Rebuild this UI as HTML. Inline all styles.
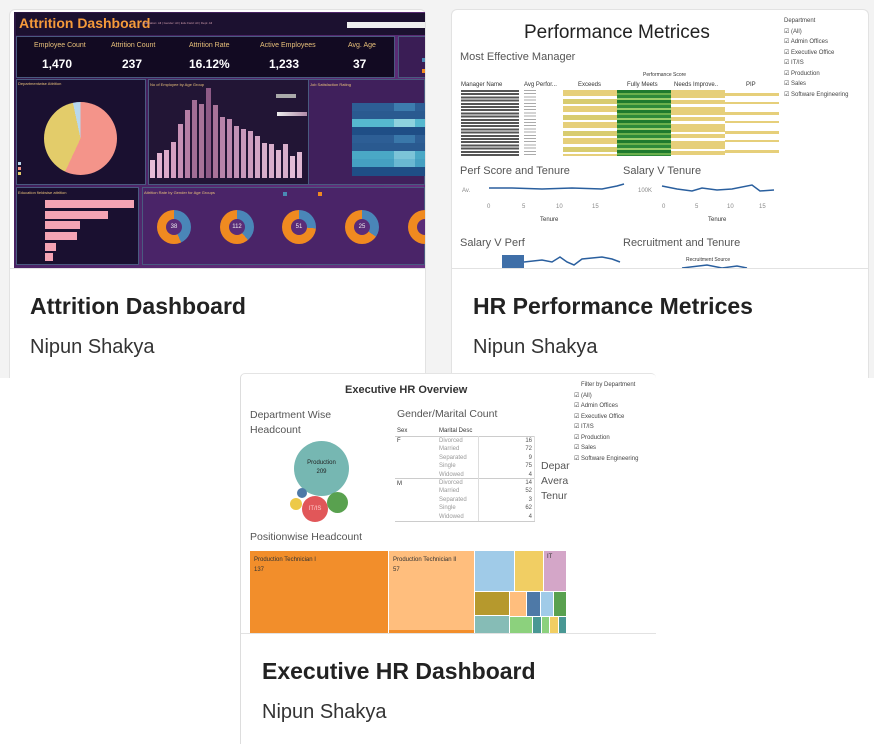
<!DOCTYPE html>
<html><head><meta charset="utf-8">
<style>
*{margin:0;padding:0;box-sizing:border-box}
body{width:874px;height:744px;overflow:hidden;background:#fff;font-family:"Liberation Sans",sans-serif;position:relative}
.a{position:absolute}
.t{font-family:"Liberation Sans",sans-serif}
</style></head><body>
<div class="a" style="left:0;top:0;width:874px;height:378px;background:#f3f3f3"></div>

<div class="a" style="left:9px;top:9px;width:417px;height:369px;background:#fff;border:1px solid #e2e2e2;border-bottom:none;border-radius:6px 6px 0 0"></div>
<div class="a" style="left:451px;top:9px;width:418px;height:369px;background:#fff;border:1px solid #e2e2e2;border-bottom:none;border-radius:6px 6px 0 0"></div>

<!-- Attrition thumbnail -->
<div class="a" style="left:14px;top:12px;width:411px;height:256px;background:linear-gradient(135deg,#2a1640 0%,#4b2366 40%,#5e2d78 70%,#6a3384 100%);overflow:hidden">
  <div class="a" style="left:2px;top:1px;width:409px;height:22px;background:#1c1130"></div>
  <div class="a t" style="left:5px;top:3px;color:#f59a3a;font-size:14px;font-weight:bold">Attrition Dashboard</div>
  <div class="a t" style="left:129px;top:9px;color:#c9a;font-size:3px">Education: All | Gender: All | Edu Field: All | Dept: All</div>
  <div class="a" style="left:333px;top:10px;width:80px;height:6px;background:#eee"></div>
  <div class="a" style="left:2px;top:24px;width:379px;height:42px;background:#120a22;border:1px solid #4a5a80"></div>
  <div class="a t" style="left:20px;top:30px;color:#e8c07a;font-size:7px">Employee Count</div>
  <div class="a t" style="left:28px;top:45px;color:#fff;font-size:12px;font-weight:bold">1,470</div>
  <div class="a t" style="left:97px;top:30px;color:#e8c07a;font-size:7px">Attrition Count</div>
  <div class="a t" style="left:108px;top:45px;color:#fff;font-size:12px;font-weight:bold">237</div>
  <div class="a t" style="left:175px;top:30px;color:#e8c07a;font-size:7px">Attrition Rate</div>
  <div class="a t" style="left:175px;top:45px;color:#fff;font-size:12px;font-weight:bold">16.12%</div>
  <div class="a t" style="left:246px;top:30px;color:#e8c07a;font-size:7px">Active Employees</div>
  <div class="a t" style="left:255px;top:45px;color:#fff;font-size:12px;font-weight:bold">1,233</div>
  <div class="a t" style="left:334px;top:30px;color:#e8c07a;font-size:7px">Avg. Age</div>
  <div class="a t" style="left:339px;top:45px;color:#fff;font-size:12px;font-weight:bold">37</div>
  <div class="a" style="left:384px;top:24px;width:30px;height:42px;background:#3a1d55;border:1px solid #4a5a80"></div>
  <div class="a" style="left:408px;top:46px;width:4px;height:4px;background:#4a8ab5"></div>
  <div class="a" style="left:408px;top:57px;width:4px;height:4px;background:#f08a20"></div>
  <div class="a" style="left:2px;top:67px;width:130px;height:106px;background:#1a1030;border:1px solid #4a5a80"></div>
  <div class="a t" style="left:4px;top:69px;color:#e8c07a;font-size:4px">Departmentwise Attrition</div>
  <div class="a" style="left:30px;top:90px;width:73px;height:73px;border-radius:50%;background:conic-gradient(#f4948a 0deg 205deg,#e3cc6a 205deg 348deg,#b8d8ee 348deg 360deg)"></div>
  <div class="a" style="left:4px;top:150px;width:3px;height:3px;background:#b8d8ee"></div>
  <div class="a" style="left:4px;top:155px;width:3px;height:3px;background:#f4948a"></div>
  <div class="a" style="left:4px;top:160px;width:3px;height:3px;background:#e3cc6a"></div>
  <div class="a" style="left:134px;top:67px;width:172px;height:106px;background:#221535;border:1px solid #4a5a80"></div>
  <div class="a t" style="left:136px;top:70px;color:#e8c07a;font-size:4px">No of Employee by Age Group</div>
  <div class="a" style="left:262px;top:82px;width:20px;height:4px;background:#aaa"></div>
  <div class="a" style="left:263px;top:100px;width:30px;height:4px;background:linear-gradient(90deg,#eee,#b08aa8)"></div>
  <div class="a" style="left:-14px;top:-12px;width:425px;height:268px">
  <div class="a" style="left:150px;top:160px;width:5px;height:18px;background:#e7bcd7"></div>
  <div class="a" style="left:157px;top:153px;width:5px;height:25px;background:#e2b2d0"></div>
  <div class="a" style="left:164px;top:150px;width:5px;height:28px;background:#dcaaca"></div>
  <div class="a" style="left:171px;top:142px;width:5px;height:36px;background:#d4a0c2"></div>
  <div class="a" style="left:178px;top:124px;width:5px;height:54px;background:#c690b5"></div>
  <div class="a" style="left:185px;top:110px;width:5px;height:68px;background:#b57ea5"></div>
  <div class="a" style="left:192px;top:100px;width:5px;height:78px;background:#a26e96"></div>
  <div class="a" style="left:199px;top:104px;width:5px;height:74px;background:#a87399"></div>
  <div class="a" style="left:206px;top:88px;width:5px;height:90px;background:#8e5a86"></div>
  <div class="a" style="left:213px;top:105px;width:5px;height:73px;background:#a87399"></div>
  <div class="a" style="left:220px;top:117px;width:5px;height:61px;background:#b884aa"></div>
  <div class="a" style="left:227px;top:119px;width:5px;height:59px;background:#bb87ad"></div>
  <div class="a" style="left:234px;top:126px;width:5px;height:52px;background:#c292b6"></div>
  <div class="a" style="left:241px;top:129px;width:5px;height:49px;background:#c899bb"></div>
  <div class="a" style="left:248px;top:131px;width:5px;height:47px;background:#cc9dbe"></div>
  <div class="a" style="left:255px;top:136px;width:5px;height:42px;background:#d2a6c5"></div>
  <div class="a" style="left:262px;top:143px;width:5px;height:35px;background:#d8aecb"></div>
  <div class="a" style="left:269px;top:144px;width:5px;height:34px;background:#d8aecb"></div>
  <div class="a" style="left:276px;top:150px;width:5px;height:28px;background:#ddb5cf"></div>
  <div class="a" style="left:283px;top:144px;width:5px;height:34px;background:#d8aecb"></div>
  <div class="a" style="left:290px;top:156px;width:5px;height:22px;background:#e2bcd6"></div>
  <div class="a" style="left:297px;top:152px;width:5px;height:26px;background:#e0b8d3"></div>
  </div>
  <div class="a" style="left:294px;top:67px;width:117px;height:106px;background:#40205c;border:1px solid #4a5a80"></div>
  <div class="a t" style="left:296px;top:70px;color:#e8c07a;font-size:4px">Job Satisfaction Rating</div>
  <div class="a" style="left:338px;top:91px;width:73px;height:73px;background:
    linear-gradient(#2d5e95 0 8px,#2a5a90 8px 16px,#56b8cf 16px 24px,#1f4e86 24px 32px,#2d5e95 32px 40px,#2a5a90 40px 48px,#4aa8c6 48px 56px,#45a0c2 56px 64px,#1f4e86 64px 73px)"></div>
  <div class="a" style="left:380px;top:91px;width:21px;height:73px;background:
    linear-gradient(#3d7cae 0 8px,#2a5a90 8px 16px,#8ed2de 16px 24px,#1f4e86 24px 32px,#3a78aa 32px 40px,#2a5a90 40px 48px,#7cc4d8 48px 56px,#6ab8d2 56px 64px,#1f4e86 64px 73px)"></div>
  <div class="a" style="left:2px;top:175px;width:123px;height:78px;background:#1a1030;border:1px solid #4a5a80"></div>
  <div class="a t" style="left:4px;top:178px;color:#e8c07a;font-size:4px">Education fieldwise attrition</div>
  <div class="a" style="left:31px;top:188px;width:89px;height:8px;background:#f4a3b4"></div>
  <div class="a" style="left:31px;top:199px;width:63px;height:8px;background:#f4a3b4"></div>
  <div class="a" style="left:31px;top:209px;width:35px;height:8px;background:#f4a3b4"></div>
  <div class="a" style="left:31px;top:220px;width:32px;height:8px;background:#f4a3b4"></div>
  <div class="a" style="left:31px;top:231px;width:11px;height:8px;background:#f4a3b4"></div>
  <div class="a" style="left:31px;top:241px;width:8px;height:8px;background:#f4a3b4"></div>
  <div class="a" style="left:128px;top:175px;width:283px;height:78px;background:#4a2468;border:1px solid #4a5a80"></div>
  <div class="a t" style="left:130px;top:178px;color:#e8c07a;font-size:4px">Attrition Rate by Gender for Age Groups</div>
  <div class="a" style="left:269px;top:180px;width:4px;height:4px;background:#4a8ab5"></div>
  <div class="a" style="left:304px;top:180px;width:4px;height:4px;background:#f08a20"></div>
</div>
<div class="a" style="left:157px;top:210px;width:34px;height:34px;border-radius:50%;background:conic-gradient(#4a86b8 0 155deg,#f08a20 155deg 360deg)"><div class="a" style="left:9px;top:9px;width:16px;height:16px;border-radius:50%;background:#5a2c78;color:#eee;font-size:6px;text-align:center;line-height:16px">38</div></div>
<div class="a" style="left:220px;top:210px;width:34px;height:34px;border-radius:50%;background:conic-gradient(#4a86b8 0 140deg,#f08a20 140deg 360deg)"><div class="a" style="left:9px;top:9px;width:16px;height:16px;border-radius:50%;background:#5a2c78;color:#eee;font-size:6px;text-align:center;line-height:16px">112</div></div>
<div class="a" style="left:282px;top:210px;width:34px;height:34px;border-radius:50%;background:conic-gradient(#4a86b8 0 95deg,#f08a20 95deg 360deg)"><div class="a" style="left:9px;top:9px;width:16px;height:16px;border-radius:50%;background:#5a2c78;color:#eee;font-size:6px;text-align:center;line-height:16px">51</div></div>
<div class="a" style="left:345px;top:210px;width:34px;height:34px;border-radius:50%;background:conic-gradient(#4a86b8 0 125deg,#f08a20 125deg 360deg)"><div class="a" style="left:9px;top:9px;width:16px;height:16px;border-radius:50%;background:#5a2c78;color:#eee;font-size:6px;text-align:center;line-height:16px">25</div></div>
<div class="a" style="left:408px;top:210px;width:17px;height:34px;overflow:hidden"><div class="a" style="left:0;top:0;width:34px;height:34px;border-radius:50%;background:#f08a20"><div class="a" style="left:9px;top:9px;width:16px;height:16px;border-radius:50%;background:#5a2c78"></div></div></div>
<div class="a" style="left:9px;top:268px;width:417px;height:1px;background:#e2e2e2"></div>

<div class="a t" style="left:30px;top:293px;font-size:23px;font-weight:bold;color:#222">Attrition Dashboard</div>
<div class="a t" style="left:30px;top:336px;font-size:20px;color:#333">Nipun Shakya</div>

<!-- Performance thumbnail -->
<div class="a t" style="left:524px;top:22px;font-size:19px;color:#222">Performance Metrices</div>
<div class="a t" style="left:460px;top:51px;font-size:11px;color:#555">Most Effective Manager</div>
<div class="a t" style="left:784px;top:16px;font-size:6px;color:#444;line-height:10.5px">Department<br>☑ (All)<br>☑ Admin Offices<br>☑ Executive Office<br>☑ IT/IS<br>☑ Production<br>☑ Sales<br>☑ Software Engineering</div>
<div class="a t" style="left:643px;top:72px;font-size:5px;color:#333">Performance Score</div>
<div class="a t" style="left:461px;top:82px;font-size:6px;color:#333">Manager Name</div>
<div class="a t" style="left:524px;top:82px;font-size:6px;color:#333">Avg Perfor...</div>
<div class="a t" style="left:578px;top:82px;font-size:6px;color:#333">Exceeds</div>
<div class="a t" style="left:627px;top:82px;font-size:6px;color:#333">Fully Meets</div>
<div class="a t" style="left:674px;top:82px;font-size:6px;color:#333">Needs Improve..</div>
<div class="a t" style="left:746px;top:82px;font-size:6px;color:#333">PIP</div>
<div class="a" style="left:461px;top:90px;width:58px;height:66px;background:repeating-linear-gradient(#555 0 2px,#fff 2px 3.2px)"></div>
<div class="a" style="left:524px;top:90px;width:12px;height:66px;background:repeating-linear-gradient(#aaa 0 1px,#fff 1px 3.2px)"></div>
<div class="a" style="left:563px;top:90px;width:54px;height:66px;background:repeating-linear-gradient(#e6cf7a 0 6px,#fff 6px 9px,#d8cc70 9px 14px,#fff 14px 16px)"></div>
<div class="a" style="left:617px;top:90px;width:54px;height:66px;background:repeating-linear-gradient(#1f7a2e 0 3px,#6ab04c 3px 5px,#2e8a3a 5px 8px,#9acd6a 8px 10px)"></div>
<div class="a" style="left:671px;top:90px;width:54px;height:66px;background:repeating-linear-gradient(#e6cf7a 0 8px,#fff 8px 10px,#e6cf7a 10px 14px,#fff 14px 17px)"></div>
<div class="a" style="left:725px;top:90px;width:54px;height:66px;background:repeating-linear-gradient(#fff 0 3px,#e6cf7a 3px 6px,#fff 6px 12px,#e6cf7a 12px 14px,#fff 14px 19px)"></div>
<div class="a t" style="left:460px;top:165px;font-size:11px;color:#555">Perf Score and Tenure</div>
<div class="a t" style="left:623px;top:165px;font-size:11px;color:#555">Salary V Tenure</div>
<svg class="a" style="left:452px;top:180px" width="416" height="88">
 <polyline fill="none" stroke="#2a5f9e" stroke-width="1.5" points="37,8 60,8 90,9 120,8 150,9 165,6 172,4"/>
 <polyline fill="none" stroke="#2a5f9e" stroke-width="1.5" points="210,6 225,9 240,11 250,8 265,10 280,9 300,5 308,11 322,10"/>
 <g font-size="6" fill="#888" font-family="Liberation Sans"><text x="35" y="28">0</text><text x="70" y="28">5</text><text x="104" y="28">10</text><text x="140" y="28">15</text><text x="210" y="28">0</text><text x="243" y="28">5</text><text x="275" y="28">10</text><text x="307" y="28">15</text><text x="10" y="12">Av.</text><text x="186" y="12">100K</text></g>
 <g font-size="6" fill="#333" font-family="Liberation Sans"><text x="88" y="41">Tenure</text><text x="256" y="41">Tenure</text></g>
 <text x="8" y="66" font-size="11" fill="#555" font-family="Liberation Sans">Salary V Perf</text>
 <text x="171" y="66" font-size="11" fill="#555" font-family="Liberation Sans">Recruitment and Tenure</text>
 <text x="234" y="81" font-size="5" fill="#333" font-family="Liberation Sans">Recruitment Source</text>
 <rect x="50" y="75" width="22" height="13" fill="#3f6fa8"/>
 <polyline fill="none" stroke="#2a5f9e" stroke-width="1.5" points="72,82 90,80 100,82 108,77 115,82 122,85 130,79 150,77 160,79 168,82"/>
 <polyline fill="none" stroke="#2a5f9e" stroke-width="1.5" points="230,88 255,85 270,88 285,86 295,88"/>
</svg>
<div class="a" style="left:452px;top:268px;width:416px;height:1px;background:#e2e2e2"></div>
<div class="a t" style="left:473px;top:293px;font-size:23px;font-weight:bold;color:#222">HR Performance Metrices</div>
<div class="a t" style="left:473px;top:336px;font-size:20px;color:#333">Nipun Shakya</div>

<!-- Card 3 -->
<div class="a" style="left:240px;top:373px;width:416px;height:371px;background:#fff;border-left:1px solid #ddd;border-top:1px solid #e4e4e4;border-radius:5px 5px 0 0"></div>
<div class="a t" style="left:345px;top:384px;font-size:11px;font-weight:bold;color:#333">Executive HR Overview</div>
<div class="a t" style="left:574px;top:380px;font-size:6px;color:#444;line-height:10.5px"><span style="margin-left:7px">Filter by Department</span><br>☑ (All)<br>☑ Admin Offices<br>☑ Executive Office<br>☑ IT/IS<br>☑ Production<br>☑ Sales<br>☑ Software Engineering</div>
<div class="a t" style="left:250px;top:408px;font-size:10.5px;color:#555;line-height:15px">Department Wise<br>Headcount</div>
<div class="a t" style="left:397px;top:408px;font-size:10.5px;color:#555">Gender/Marital Count</div>
<div class="a t" style="left:541px;top:459px;font-size:10.5px;color:#555;line-height:15px">Depar<br>Avera<br>Tenur</div>
<div class="a" style="left:294px;top:441px;width:55px;height:55px;border-radius:50%;background:#76b7b2;font-size:6px;color:#222;text-align:center;padding-top:18px;line-height:9px">Production<br>209</div>
<div class="a" style="left:302px;top:496px;width:26px;height:26px;border-radius:50%;background:#e15759;font-size:6px;color:#fcc;text-align:center;line-height:26px">IT/IS</div>
<div class="a" style="left:327px;top:492px;width:21px;height:21px;border-radius:50%;background:#59a14f"></div>
<div class="a" style="left:290px;top:498px;width:12px;height:12px;border-radius:50%;background:#edc948"></div>
<div class="a" style="left:297px;top:488px;width:10px;height:10px;border-radius:50%;background:#4e79a7"></div>
<div class="a t" style="left:397px;top:428px;font-size:6px;color:#333">Sex</div>
<div class="a t" style="left:439px;top:428px;font-size:6px;color:#333">Marital Desc</div>
<div class="a" style="left:395px;top:436px;width:140px;height:1px;background:#ccc"></div>
<div class="a" style="left:395px;top:478px;width:140px;height:1px;background:#ccc"></div>
<div class="a" style="left:395px;top:521px;width:140px;height:1px;background:#ccc"></div>
<div class="a" style="left:478px;top:436px;width:1px;height:85px;background:#ddd"></div>
<div class="a" style="left:534px;top:436px;width:1px;height:85px;background:#ddd"></div>
<div class="a t" style="left:397px;top:438px;font-size:6px;color:#333">F</div>
<div class="a t" style="left:397px;top:481px;font-size:6px;color:#333">M</div>
<div class="a t" style="left:439px;top:437px;font-size:6px;color:#999;line-height:8.4px">Divorced<br>Married<br>Separated<br>Single<br>Widowed<br>Divorced<br>Married<br>Separated<br>Single<br>Widowed</div>
<div class="a t" style="left:500px;top:437px;width:32px;text-align:right;font-size:6px;color:#555;line-height:8.4px">16<br>72<br>9<br>75<br>4<br>14<br>52<br>3<br>62<br>4</div>
<div class="a t" style="left:250px;top:531px;font-size:10.5px;color:#555">Positionwise Headcount</div>
<div class="a" style="left:250px;top:551px;width:138px;height:82px;background:#f28e2b;font-size:6px;color:#333;padding:4px;line-height:10px">Production Technician I<br>137</div>
<div class="a" style="left:389px;top:551px;width:85px;height:79px;background:#ffbe7d;font-size:6px;color:#333;padding:4px;line-height:10px">Production Technician II<br>57</div>
<div class="a" style="left:389px;top:630px;width:85px;height:3px;background:#f28e2b"></div>
<div class="a" style="left:475px;top:551px;width:39px;height:40px;background:#a0cbe8"></div>
<div class="a" style="left:515px;top:551px;width:28px;height:40px;background:#f1ce63"></div>
<div class="a" style="left:544px;top:551px;width:22px;height:40px;background:#d4a6c8;font-size:6px;color:#333;padding:3px">IT</div>
<div class="a" style="left:475px;top:592px;width:34px;height:23px;background:#b6992d"></div>
<div class="a" style="left:475px;top:616px;width:34px;height:17px;background:#86bcb6"></div>
<div class="a" style="left:510px;top:592px;width:16px;height:24px;background:#ffbe7d"></div>
<div class="a" style="left:527px;top:592px;width:13px;height:24px;background:#4e79a7"></div>
<div class="a" style="left:541px;top:592px;width:12px;height:24px;background:#a0cbe8"></div>
<div class="a" style="left:554px;top:592px;width:12px;height:24px;background:#59a14f"></div>
<div class="a" style="left:510px;top:617px;width:22px;height:16px;background:#8cd17d"></div>
<div class="a" style="left:533px;top:617px;width:8px;height:16px;background:#499894"></div>
<div class="a" style="left:542px;top:617px;width:7px;height:16px;background:#8cd17d"></div>
<div class="a" style="left:550px;top:617px;width:8px;height:16px;background:#f1ce63"></div>
<div class="a" style="left:559px;top:617px;width:7px;height:16px;background:#499894"></div>
<div class="a" style="left:241px;top:633px;width:415px;height:1px;background:#e2e2e2"></div>
<div class="a t" style="left:262px;top:658px;font-size:23px;font-weight:bold;color:#222">Executive HR Dashboard</div>
<div class="a t" style="left:262px;top:701px;font-size:20px;color:#333">Nipun Shakya</div>
</body></html>
